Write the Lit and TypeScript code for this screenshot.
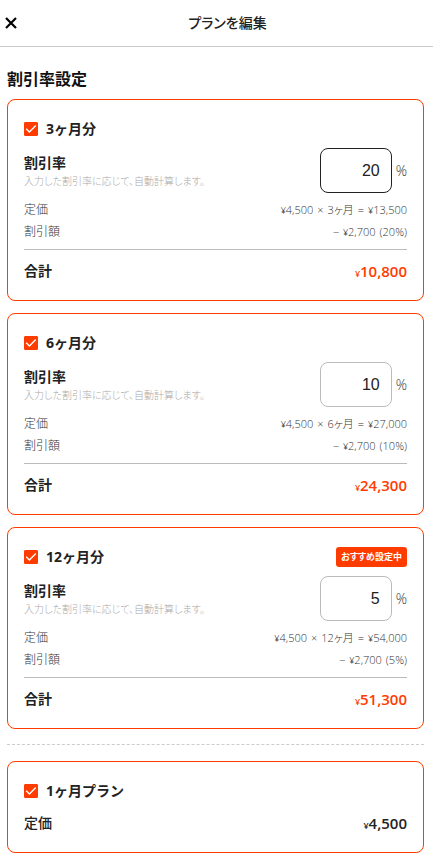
import { LitElement, html, css, svg, nothing } from "lit";
import { customElement, property, state } from "lit/decorators.js";
import { classMap } from "lit/directives/class-map.js";

interface Plan {
  months: number;
  rate: number;
  list: string;
  gross: string;
  off: string;
  total: string;
  recommended?: boolean;
}

const PLANS: Plan[] = [
  { months: 3, rate: 20, list: "4,500", gross: "13,500", off: "2,700", total: "10,800" },
  { months: 6, rate: 10, list: "4,500", gross: "27,000", off: "2,700", total: "24,300" },
  { months: 12, rate: 5, list: "4,500", gross: "54,000", off: "2,700", total: "51,300", recommended: true },
];

const yen = (amount: string) => html`<span class="money"><span class="yen">¥</span>${amount}</span>`;

@customElement("plan-check")
export class PlanCheck extends LitElement {
  @property() label = "";
  @state() private checked = true;

  static styles = css`
    :host {
      display: block;
    }
    .row {
      display: flex;
      align-items: center;
      gap: 8px;
      font-size: 14px;
      font-weight: 700;
      font-feature-settings: normal;
      line-height: 26px;
    }
    .box {
      display: grid;
      width: 14px;
      height: 14px;
    }
    .input,
    .tick {
      grid-area: 1 / 1;
      width: 14px;
      height: 14px;
    }
    .input {
      appearance: none;
      margin: 0;
      border: 1px solid #bbb;
      border-radius: 1px;
      background: #fff;
    }
    .input:checked {
      border-color: #ff3c00;
      background: #ff3c00;
    }
    .tick {
      pointer-events: none;
    }
  `;

  render() {
    return html`<label class="row">
      <span class="box">
        <input
          class="input"
          type="checkbox"
          .checked=${this.checked}
          @change=${(e: Event) => (this.checked = (e.target as HTMLInputElement).checked)}
        />
        <svg class="tick" viewBox="0 0 14 14" aria-hidden="true">
          ${svg`<path d="M2.2 6.8 L5.4 10 L11.8 3.6" fill="none" stroke="#fff" stroke-width="1.4" />`}
        </svg>
      </span>
      <span>${this.label}</span>
    </label>`;
  }
}

@customElement("app-root")
export class AppRoot extends LitElement {
  static styles = css`
    :host {
      display: block;
      min-height: 100vh;
      background: #fff;
      color: #222;
      font-family: "Open Sans", "Noto Sans CJK JP", sans-serif;
      font-feature-settings: "palt";
    }
    *,
    *::before {
      box-sizing: border-box;
    }
    .header {
      display: flex;
      align-items: center;
      height: 47px;
      border-bottom: 1px solid #ccc;
    }
    .close {
      display: flex;
      width: 22px;
      padding: 5px;
      border: 0;
      background: none;
      color: #000;
    }
    .title {
      flex: 1;
      margin: 0;
      text-align: center;
      font-size: 14px;
      font-weight: 500;
      line-height: 24px;
    }
    .main {
      padding: 20px 9px 7px 7px;
    }
    .heading {
      margin: 0 0 8px;
      color: #111;
      font-size: 16px;
      font-weight: 700;
      line-height: 24px;
    }
    .cards {
      display: grid;
      gap: 12px;
    }
    .card {
      padding: 16px;
      border: 1px solid #ff3c00;
      border-radius: 8px;
    }
    .head,
    .rate,
    .line,
    .total,
    .field,
    .calc {
      display: flex;
      align-items: center;
    }
    .head,
    .rate,
    .line,
    .total {
      justify-content: space-between;
    }
    .head,
    .rate {
      margin-bottom: 6px;
    }
    .badge {
      padding: 0 5px;
      border-radius: 3px;
      background: #ff3c00;
      color: #fff;
      font-size: 9px;
      font-weight: 700;
      line-height: 20px;
    }
    .label {
      display: block;
      font-size: 14px;
      font-weight: 700;
      line-height: 20px;
    }
    .hint {
      margin: 0;
      color: #aaa;
      font-size: 10px;
      font-weight: 300;
      line-height: 16px;
    }
    .field {
      gap: 4px;
    }
    .number {
      width: 72px;
      height: 45px;
      padding: 0 11px;
      border: 1px solid #bbb;
      border-radius: 8px;
      background: #fff;
      color: #222;
      font: 16px "Liberation Sans", sans-serif;
      text-align: right;
    }
    .number.active {
      border-color: #222;
    }
    .percent {
      color: #333;
      font-size: 14px;
      font-weight: 300;
    }
    .line {
      height: 22px;
      color: #333;
      font-size: 12px;
      font-weight: 300;
      line-height: 22px;
    }
    .calc {
      gap: 4px;
      font-size: 11px;
    }
    .money {
      white-space: nowrap;
    }
    .yen {
      font-size: 9px;
      line-height: 1;
    }
    .total {
      font-size: 14px;
      font-weight: 500;
      line-height: 26px;
    }
    .total.ruled {
      margin-top: 6px;
      padding-top: 8px;
      border-top: 1px solid #bbb;
      font-weight: 700;
    }
    .sum {
      font-size: 15px;
      font-weight: 600;
    }
    .sum .yen {
      font-size: 9px;
    }
    .sum.accent {
      color: #ff3c00;
    }
    .divider {
      margin: 15px 0 16px;
      border: 0;
      border-top: 1px dashed #ccc;
    }
  `;

  private card(plan: Plan, index: number) {
    const id = `rate-${plan.months}`;
    return html`<section class="card">
      <div class="head">
        <plan-check label="${plan.months}ヶ月分"></plan-check>
        ${plan.recommended ? html`<span class="badge">おすすめ設定中</span>` : nothing}
      </div>
      <div class="rate">
        <div>
          <label class="label" for=${id}>割引率</label>
          <p class="hint">入力した割引率に応じて、自動計算します。</p>
        </div>
        <div class="field">
          <input
            id=${id}
            class=${classMap({ number: true, active: index === 0 })}
            type="text"
            inputmode="numeric"
            .value=${String(plan.rate)}
          />
          <span class="percent">%</span>
        </div>
      </div>
      <div class="line">
        <span>定価</span>
        <span class="calc">
          ${yen(plan.list)}<span>×</span><span>${plan.months}ヶ月</span><span>=</span>${yen(plan.gross)}
        </span>
      </div>
      <div class="line">
        <span>割引額</span>
        <span class="calc"><span>−</span>${yen(plan.off)}<span>(${plan.rate}%)</span></span>
      </div>
      <div class="total ruled">
        <span>合計</span>
        <span class="sum accent">${yen(plan.total)}</span>
      </div>
    </section>`;
  }

  render() {
    return html`
      <header class="header">
        <button class="close" aria-label="閉じる">
          <svg width="12" height="12" viewBox="0 0 12 12" aria-hidden="true">
            <path d="M1 1 L11 11 M11 1 L1 11" fill="none" stroke="currentColor" stroke-width="2.2" />
          </svg>
        </button>
        <h1 class="title">プランを編集</h1>
      </header>
      <main class="main">
        <h2 class="heading">割引率設定</h2>
        <div class="cards">${PLANS.map((plan, i) => this.card(plan, i))}</div>
        <hr class="divider" />
        <section class="card">
          <div class="head"><plan-check label="1ヶ月プラン"></plan-check></div>
          <div class="total">
            <span>定価</span>
            <span class="sum">${yen("4,500")}</span>
          </div>
        </section>
      </main>
    `;
  }
}
